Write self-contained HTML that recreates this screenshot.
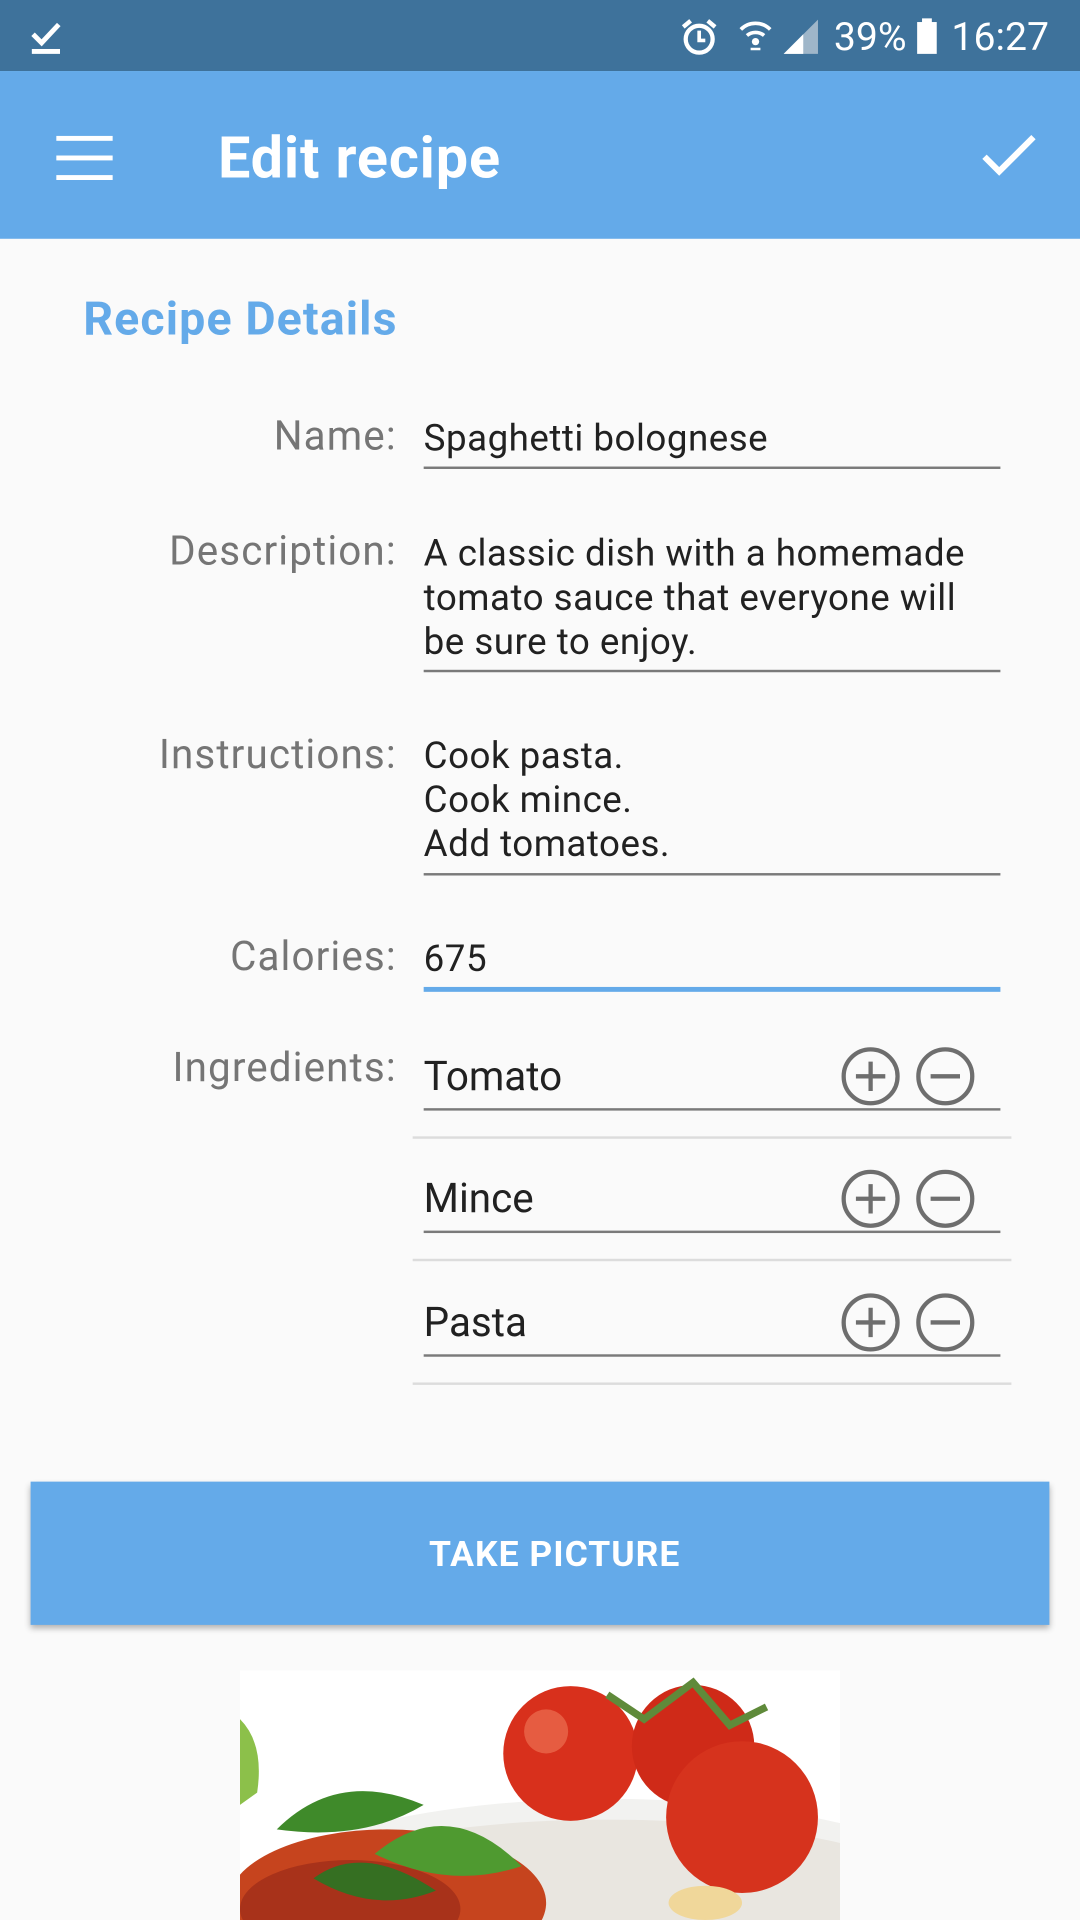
<!DOCTYPE html>
<html><head><meta charset="utf-8"><style>
html,body{margin:0;padding:0;width:1080px;height:1920px;overflow:hidden;background:#fafafa;}
#s{position:absolute;left:0;top:0;width:882px;height:1568px;overflow:hidden;transform:scale(1.2244898);transform-origin:0 0;font-family:"Roboto","Liberation Sans",sans-serif;}
.a{position:absolute;}
.lbl{position:absolute;right:558px;color:#757575;font-size:33px;letter-spacing:0.9px;line-height:36px;text-align:right;white-space:nowrap;}
.txt{position:absolute;left:346px;color:#212121;font-size:30px;letter-spacing:0.4px;line-height:36px;white-space:nowrap;}
.ul{position:absolute;left:346px;width:471px;height:2px;background:#7a7a7a;}
.sep{position:absolute;left:337px;width:489px;height:2px;background:#dcdcdc;}
.ing{position:absolute;left:346px;color:#212121;font-size:33px;line-height:40px;}
</style></head><body><div id="s">
<div class="a" style="left:0;top:0;width:882px;height:58px;background:#3e729b"></div>
<svg class="a" style="left:24px;top:16px" width="28" height="30" viewBox="0 0 28 30"><path d="M3 12 L10 19 L24 4" stroke="#fff" stroke-width="4" fill="none"/><rect x="2" y="24" width="23" height="4" fill="#fff"/></svg>
<svg class="a" style="left:555px;top:14px" width="32" height="32" viewBox="0 0 32 32"><circle cx="16" cy="18" r="11" stroke="#fff" stroke-width="3.5" fill="none"/><path d="M16 11v8h5" stroke="#fff" stroke-width="3" fill="none"/><path d="M3 8l6-5M29 8l-6-5" stroke="#fff" stroke-width="3.5"/></svg>
<svg class="a" style="left:602px;top:14px" width="30" height="32" viewBox="0 0 30 32"><path d="M3 10 A17 17 0 0 1 27 10" stroke="#fff" stroke-width="3" fill="none"/><path d="M8 15 A11 11 0 0 1 22 15" stroke="#fff" stroke-width="3" fill="none"/><circle cx="15" cy="20" r="3" fill="#fff"/><path d="M11 26h8" stroke="#fff" stroke-width="2"/></svg>
<svg class="a" style="left:638px;top:14px" width="32" height="32" viewBox="0 0 32 32"><path d="M2 30 L30 2 V30 Z" fill="#9fb6c9"/><path d="M2 30 L18 14 V30 Z" fill="#fff"/></svg>
<div class="a" style="left:681px;top:10px;color:#fff;font-size:32px;line-height:40px">39%</div>
<div class="a" style="left:749px;top:18px;width:16px;height:26px;background:#fff"></div>
<div class="a" style="left:753px;top:15px;width:8px;height:4px;background:#fff"></div>
<div class="a" style="left:777px;top:10px;color:#fff;font-size:32px;line-height:40px">16:27</div>
<div class="a" style="left:0;top:58px;width:882px;height:137px;background:#64aae9"></div>
<div class="a" style="left:46px;top:111px;width:46px;height:4px;background:#fff"></div>
<div class="a" style="left:46px;top:127px;width:46px;height:4px;background:#fff"></div>
<div class="a" style="left:46px;top:143px;width:46px;height:4px;background:#fff"></div>
<div class="a" style="left:178px;top:101px;color:#fff;font-size:47px;letter-spacing:0.7px;font-weight:bold;line-height:58px;white-space:nowrap">Edit recipe</div>
<svg class="a" style="left:800px;top:108px" width="48" height="40" viewBox="0 0 48 40"><path d="M4 20 L16 32 L44 4" stroke="#fff" stroke-width="5" fill="none"/></svg>
<div class="a" style="left:68px;top:238px;color:#64aae9;font-size:38px;letter-spacing:0.9px;font-weight:bold;line-height:46px;white-space:nowrap">Recipe Details</div>
<div class="lbl" style="top:339px">Name:</div>
<div class="txt" style="top:341px">Spaghetti bolognese</div>
<div class="ul" style="top:381px"></div>
<div class="lbl" style="top:433px">Description:</div>
<div class="txt" style="top:435px">A classic dish with a homemade<br>tomato sauce that everyone will<br>be sure to enjoy.</div>
<div class="ul" style="top:547px"></div>
<div class="lbl" style="top:599px">Instructions:</div>
<div class="txt" style="top:600px">Cook pasta.<br>Cook mince.<br>Add tomatoes.</div>
<div class="ul" style="top:713px"></div>
<div class="lbl" style="top:764px">Calories:</div>
<div class="txt" style="top:766px">675</div>
<div class="a" style="left:346px;top:806px;width:471px;height:4px;background:#64aae9"></div>
<div class="lbl" style="top:855px">Ingredients:</div>

<div class="ing" style="top:860px">Tomato</div>
<div class="ul" style="top:905px"></div><div class="sep" style="top:928px"></div>
<div class="ing" style="top:960px">Mince</div>
<div class="ul" style="top:1005px"></div><div class="sep" style="top:1028px"></div>
<div class="ing" style="top:1061px">Pasta</div>
<div class="ul" style="top:1106px"></div><div class="sep" style="top:1129px"></div>
<svg class="a" style="left:680px;top:850px" width="130" height="260" viewBox="0 0 130 260">
<g stroke="#6e6e6e" stroke-width="3.5" fill="none">
<circle cx="31" cy="29" r="22"/><path d="M19 29h24M31 17v24"/><circle cx="92" cy="29" r="22"/><path d="M80 29h24"/>
<circle cx="31" cy="129" r="22"/><path d="M19 129h24M31 117v24"/><circle cx="92" cy="129" r="22"/><path d="M80 129h24"/>
<circle cx="31" cy="230" r="22"/><path d="M19 230h24M31 218v24"/><circle cx="92" cy="230" r="22"/><path d="M80 230h24"/>
</g></svg>
<div class="a" style="left:25px;top:1210px;width:832px;height:117px;background:#64aae9;box-shadow:0 3px 5px rgba(0,0,0,.3)"></div>
<div class="a" style="left:37px;top:1251px;width:832px;text-align:center;color:#fff;font-size:29px;letter-spacing:0.8px;font-weight:bold;line-height:38px">TAKE PICTURE</div>
<svg class="a" style="left:196px;top:1364px" width="490" height="204" viewBox="0 0 490 204">
<rect width="490" height="204" fill="#fff"/>
<ellipse cx="300" cy="200" rx="310" ry="95" fill="#f2f2f0"/>
<ellipse cx="300" cy="200" rx="290" ry="78" fill="#e9e6e0"/>
<ellipse cx="120" cy="190" rx="130" ry="60" fill="#c6441e"/>
<ellipse cx="90" cy="195" rx="90" ry="40" fill="#a8321a"/>
<circle cx="270" cy="68" r="55" fill="#d8301c"/>
<circle cx="370" cy="62" r="50" fill="#cf2a18"/>
<circle cx="410" cy="120" r="62" fill="#d6331d"/>
<circle cx="250" cy="50" r="18" fill="#f07a5a" opacity=".6"/>
<path d="M300 20 L330 40 L370 10 L400 45 L430 30" stroke="#5f8a3a" stroke-width="6" fill="none"/>
<path d="M30 130 Q80 80 150 110 Q100 140 30 130Z" fill="#3f8a2a"/>
<path d="M110 150 Q170 100 230 160 Q170 180 110 150Z" fill="#4f9a30"/>
<path d="M60 170 Q100 140 160 180 Q110 200 60 170Z" fill="#356f22"/>
<path d="M0 40 Q20 60 14 100 L0 110Z" fill="#8cc04a"/>
<ellipse cx="380" cy="190" rx="30" ry="14" fill="#f0d79a"/>
</svg>
</div></body></html>
